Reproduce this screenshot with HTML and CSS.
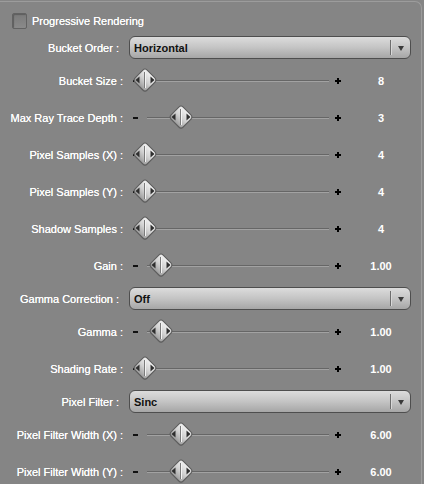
FILE: index.html
```html
<!DOCTYPE html>
<html>
<head>
<meta charset="utf-8">
<link rel="stylesheet" href="styles.css">
</head>
<body>
<svg width="0" height="0" class="defs">
  <defs>
    <linearGradient id="tg" x1="0" y1="0" x2="0" y2="1">
      <stop offset="0" stop-color="#f2f2f2"/>
      <stop offset="0.5" stop-color="#d2d2d2"/>
      <stop offset="1" stop-color="#9c9c9c"/>
    </linearGradient>
    <symbol id="thumb" viewBox="0 0 28 28">
      <rect x="5.5" y="6.5" width="17" height="17" rx="3" transform="rotate(45 14 15)" fill="#5a5a5a" opacity="0.5"/>
      <rect x="5.5" y="5.5" width="17" height="17" rx="3" transform="rotate(45 14 14)" fill="url(#tg)" stroke="#5c5c5c" stroke-width="1"/>
      <polygon points="4.5,14 8.5,10.5 8.5,17.5" fill="#2e2e2e"/>
      <polygon points="23.5,14 19.5,10.5 19.5,17.5" fill="#2e2e2e"/>
      <line x1="13.5" y1="6" x2="13.5" y2="22" stroke="#7a7a7a" stroke-width="1"/>
      <line x1="14.5" y1="6" x2="14.5" y2="22" stroke="#f4f4f4" stroke-width="1"/>
    </symbol>
  </defs>
</svg>
<div class="panel">
  <div class="check-row">
    <span class="checkbox"></span>
    <span class="check-label">Progressive Rendering</span>
  </div>

  <div class="row dd-row">
    <label class="lbl lbl-dd">Bucket Order :</label>
    <div class="dropdown"><span class="dd-text">Horizontal</span><span class="dd-sep"></span><span class="dd-arrow"></span></div>
  </div>

  <div class="row sl-row">
    <label class="lbl">Bucket Size :</label>
    <div class="slider"><span class="minus"></span><span class="track"><svg class="thumb" style="left:-16px"><use href="#thumb"/></svg></span><span class="plus"></span><span class="value">8</span></div>
  </div>

  <div class="row sl-row">
    <label class="lbl">Max Ray Trace Depth :</label>
    <div class="slider"><span class="minus"></span><span class="track"><svg class="thumb" style="left:20px"><use href="#thumb"/></svg></span><span class="plus"></span><span class="value">3</span></div>
  </div>

  <div class="row sl-row">
    <label class="lbl">Pixel Samples (X) :</label>
    <div class="slider"><span class="minus"></span><span class="track"><svg class="thumb" style="left:-16px"><use href="#thumb"/></svg></span><span class="plus"></span><span class="value">4</span></div>
  </div>

  <div class="row sl-row">
    <label class="lbl">Pixel Samples (Y) :</label>
    <div class="slider"><span class="minus"></span><span class="track"><svg class="thumb" style="left:-16px"><use href="#thumb"/></svg></span><span class="plus"></span><span class="value">4</span></div>
  </div>

  <div class="row sl-row">
    <label class="lbl">Shadow Samples :</label>
    <div class="slider"><span class="minus"></span><span class="track"><svg class="thumb" style="left:-16px"><use href="#thumb"/></svg></span><span class="plus"></span><span class="value">4</span></div>
  </div>

  <div class="row sl-row">
    <label class="lbl">Gain :</label>
    <div class="slider"><span class="minus"></span><span class="track"><svg class="thumb" style="left:0px"><use href="#thumb"/></svg></span><span class="plus"></span><span class="value">1.00</span></div>
  </div>

  <div class="row dd-row">
    <label class="lbl lbl-dd">Gamma Correction :</label>
    <div class="dropdown"><span class="dd-text">Off</span><span class="dd-sep"></span><span class="dd-arrow"></span></div>
  </div>

  <div class="row sl-row">
    <label class="lbl">Gamma :</label>
    <div class="slider"><span class="minus"></span><span class="track"><svg class="thumb" style="left:0px"><use href="#thumb"/></svg></span><span class="plus"></span><span class="value">1.00</span></div>
  </div>

  <div class="row sl-row">
    <label class="lbl">Shading Rate :</label>
    <div class="slider"><span class="minus"></span><span class="track"><svg class="thumb" style="left:-16px"><use href="#thumb"/></svg></span><span class="plus"></span><span class="value">1.00</span></div>
  </div>

  <div class="row dd-row">
    <label class="lbl lbl-dd">Pixel Filter :</label>
    <div class="dropdown"><span class="dd-text">Sinc</span><span class="dd-sep"></span><span class="dd-arrow"></span></div>
  </div>

  <div class="row sl-row">
    <label class="lbl">Pixel Filter Width (X) :</label>
    <div class="slider"><span class="minus"></span><span class="track"><svg class="thumb" style="left:20px"><use href="#thumb"/></svg></span><span class="plus"></span><span class="value">6.00</span></div>
  </div>

  <div class="row sl-row">
    <label class="lbl">Pixel Filter Width (Y) :</label>
    <div class="slider"><span class="minus"></span><span class="track"><svg class="thumb" style="left:20px"><use href="#thumb"/></svg></span><span class="plus"></span><span class="value">6.00</span></div>
  </div>
</div>
</body>
</html>
```

FILE: styles.css
```css
html, body {
  margin: 0;
  padding: 0;
  background: #858585;
  overflow: hidden;
}
body {
  width: 424px;
  height: 484px;
  font-family: "Liberation Sans", Arial, sans-serif;
  font-size: 11px;
  color: #ffffff;
}
.defs {
  position: absolute;
  width: 0;
  height: 0;
}
.panel {
  margin-top: 1px;
  margin-right: 2px;
  border-top: 1px solid #9c9c9c;
  border-right: 1px solid #9c9c9c;
  border-top-right-radius: 7px;
  padding-top: 6px;
}
.check-row {
  height: 25px;
  display: flex;
  align-items: center;
  padding-left: 12px;
}
.checkbox {
  width: 13px;
  height: 14px;
  border: 1px solid #626262;
  border-radius: 2px;
  background: linear-gradient(#7a7a7a, #8a8a8a);
  box-shadow: inset 1px 1px 1px #5e5e5e;
}
.check-label {
  margin-left: 5px;
  text-shadow: 0 0 0.4px #fff;
}
.row {
  display: grid;
  grid-template-columns: 125px 1fr;
  column-gap: 4px;
  align-items: center;
}
.sl-row {
  height: 37px;
}
.dd-row {
  height: 29px;
}
.lbl {
  text-align: right;
  padding-right: 2px;
  white-space: nowrap;
  text-shadow: 0 0 0.4px #fff;
}
.lbl-dd {
  padding-right: 6px;
}
.dropdown {
  width: 280px;
  height: 21px;
  border: 1px solid #4e4e4e;
  border-radius: 6px;
  background: linear-gradient(#dcdcdc, #c4c4c4 50%, #a6a6a6);
  display: flex;
  align-items: center;
  box-sizing: content-box;
}
.dd-text {
  flex: 1;
  padding-left: 4px;
  font-weight: bold;
  color: #111;
}
.dd-sep {
  width: 1px;
  height: 15px;
  background: #6e6e6e;
  box-shadow: 1px 0 0 #d8d8d8;
}
.dd-arrow {
  width: 0;
  height: 0;
  margin: 1px 6px 0 7px;
  border-left: 3.5px solid transparent;
  border-right: 3.5px solid transparent;
  border-top: 5px solid #3a3a3a;
}
.slider {
  display: flex;
  align-items: center;
  height: 28px;
}
.minus {
  margin-left: 4px;
  width: 5px;
  height: 2px;
  background: #111;
}
.track {
  position: relative;
  margin-left: 9px;
  width: 182px;
  height: 1px;
  background: #666;
  box-shadow: 0 1px 0 #a2a2a2;
}
.thumb {
  position: absolute;
  top: -14px;
  width: 28px;
  height: 28px;
}
.plus {
  position: relative;
  margin-left: 6px;
  width: 6px;
  height: 6px;
}
.plus::before, .plus::after {
  content: "";
  position: absolute;
  background: #000;
}
.plus::before {
  left: 0;
  top: 2px;
  width: 6px;
  height: 2px;
}
.plus::after {
  left: 2px;
  top: 0;
  width: 2px;
  height: 6px;
}
.value {
  margin-left: 20px;
  width: 40px;
  text-align: center;
  font-weight: bold;
  color: #fff;
}
```
